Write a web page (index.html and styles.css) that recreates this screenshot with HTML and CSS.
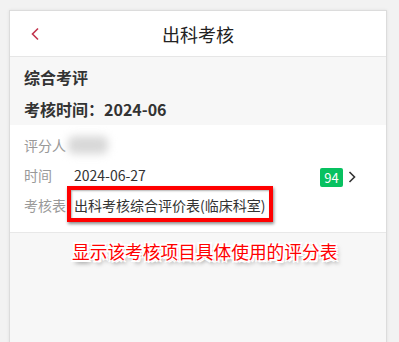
FILE: index.html
```html
<!DOCTYPE html>
<html lang="zh">
<head>
<meta charset="utf-8">
<link rel="stylesheet" href="styles.css">
</head>
<body>
<div class="card">
  <header class="nav">
    <svg class="back" width="10" height="14" viewBox="0 0 10 14"><path d="M8 1.5 L2.5 7 L8 12.5" fill="none" stroke="#c2334d" stroke-width="1.6"/></svg>
    <h1 class="title">出科考核</h1>
  </header>
  <section class="summary">
    <div class="sum-line">综合考评</div>
    <div class="sum-line">考核时间：2024-06</div>
  </section>
  <section class="detail">
    <div class="rows">
      <div class="row"><span class="label">评分人</span><span class="blur"></span></div>
      <div class="row"><span class="label">时间</span><span class="value">2024-06-27</span></div>
      <div class="row"><span class="label">考核表</span><span class="value">出科考核综合评价表(临床科室)</span></div>
    </div>
    <div class="score">
      <span class="badge">94</span>
      <svg class="chev" width="8" height="12" viewBox="0 0 8 12"><path d="M1.5 1 L6.5 6 L1.5 11" fill="none" stroke="#333" stroke-width="1.6"/></svg>
    </div>
    <div class="highlight"></div>
  </section>
  <div class="note">显示该考核项目具体使用的评分表</div>
</div>
</body>
</html>
```
FILE: styles.css
```css
html, body { margin: 0; padding: 0; }
body {
  background: #f2f2f2;
  font-family: "Noto Sans CJK SC", "Noto Sans", sans-serif;
  width: 399px; height: 342px; overflow: hidden;
}
.card {
  margin: 10px 0 0 9px;
  width: 376px;
  height: 340px;
  background: #f7f7f7;
  border: 1px solid #dcdcdc;
  box-shadow: 0 0 3px rgba(0,0,0,0.08);
  position: relative;
}
.nav {
  height: 45px;
  background: #fff;
  border-bottom: 1px solid #e6e6e6;
  display: flex; align-items: center; justify-content: center;
  position: relative;
}
.back { position: absolute; left: 20px; top: 16px; }
.title { margin: 0; font-size: 18px; font-weight: normal; color: #222; line-height: 1; }
.summary { padding: 4px 14px 0; height: 64px; }
.sum-line { font-size: 16px; font-weight: bold; color: #333; line-height: 32px; }
.detail {
  background: #fff;
  border-bottom: 1px solid #e8e8e8;
  padding: 5px 14px 12px;
  display: flex; align-items: center;
  position: relative;
}
.rows { flex: 1; }
.row { height: 30px; display: flex; align-items: center; font-size: 14px; }
.label { width: 50px; color: #999; }
.value { color: #333; }
.blur { width: 40px; height: 18px; margin-left: -6px; background: #d8d8d8; filter: blur(4px); border-radius: 6px; }
.score { display: flex; align-items: center; gap: 5px; margin-right: 16px; margin-top: 4px; }
.badge {
  background: #07c160; color: #fff; font-size: 13px;
  width: 23px; height: 19px; line-height: 19px; text-align: center; border-radius: 2px;
}
.highlight {
  position: absolute; left: 57px; top: 61px; width: 198px; height: 28px;
  border: 4px solid #f00; box-shadow: 1px 2px 3px rgba(0,0,0,0.45), inset 1px 1px 2px rgba(0,0,0,0.3);
}
.note {
  position: absolute; left: 62px; top: 228px;
  font-size: 17.7px; color: #f00; line-height: 24px;
  text-shadow: 1px 0 0 #fff, -1px 0 0 #fff, 0 1px 0 #fff, 0 -1px 0 #fff, 1px 1px 0 #fff, -1px -1px 0 #fff, 1px -1px 0 #fff, -1px 1px 0 #fff, 2px 2px 0 #fff, -2px -2px 0 #fff, 2px -2px 0 #fff, -2px 2px 0 #fff, 2px 3px 4px rgba(0,0,0,0.6);
}
```
